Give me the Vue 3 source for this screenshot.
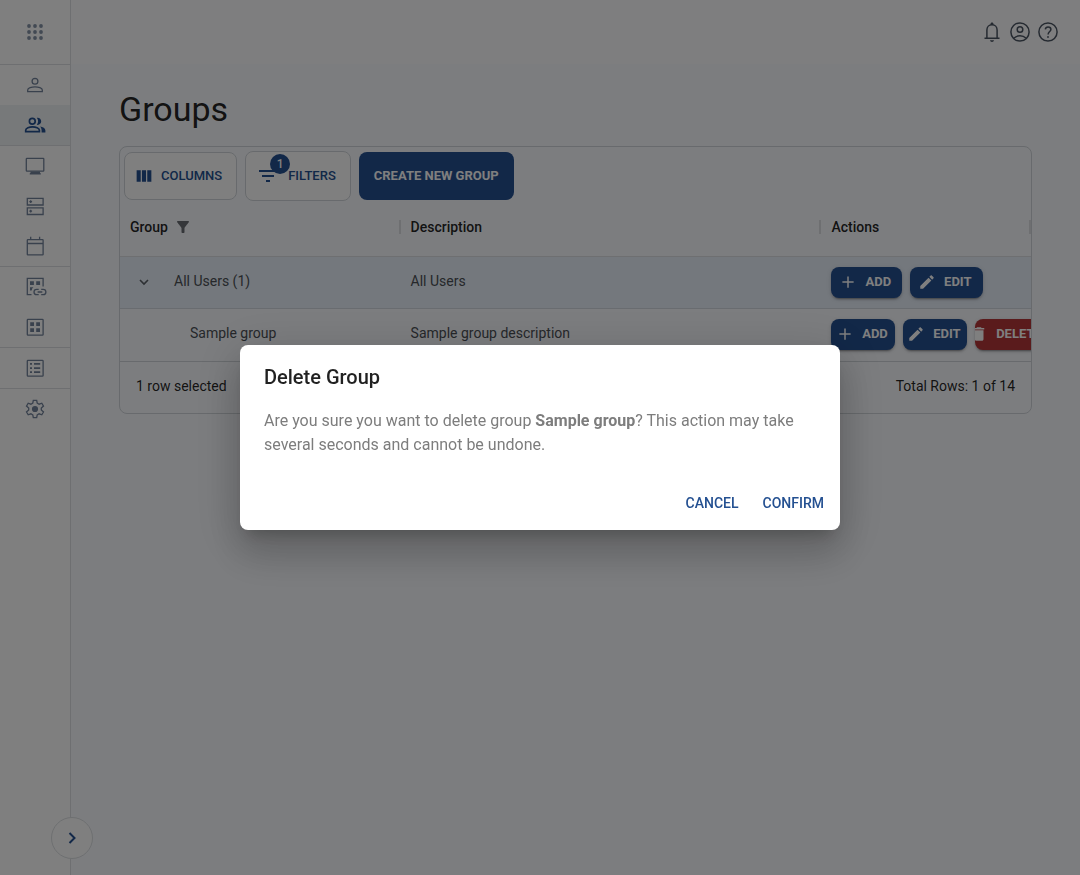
<template>
  <div class="app">
    <aside class="sidebar">
      <button class="apps-btn" aria-label="Apps">
        <svg class="icon" viewBox="0 0 24 24">
          <circle v-for="n in 9" :key="n" :cx="6 + ((n - 1) % 3) * 6" :cy="6 + Math.floor((n - 1) / 3) * 6" r="1.9" fill="currentColor" />
        </svg>
      </button>
      <nav>
        <div v-for="(group, i) in navGroups" :key="i" class="nav-group">
          <a
            v-for="item in group"
            :key="item.label"
            href="#"
            :class="['nav-item', { active: item.active }]"
            :aria-label="item.label"
            @click.prevent
          >
            <svg class="icon" viewBox="0 0 24 24">
              <path class="line" :d="item.line" />
              <path v-if="item.solid" fill="currentColor" :d="item.solid" />
            </svg>
          </a>
        </div>
      </nav>
      <button class="expand-btn" aria-label="Expand menu">
        <svg class="icon-sm" viewBox="0 0 18 18">
          <path d="M6.5 4l5 5-5 5" fill="none" stroke="currentColor" stroke-width="2" />
        </svg>
      </button>
    </aside>

    <div class="content">
      <header class="topbar">
        <button v-for="item in topIcons" :key="item.label" class="top-btn" :aria-label="item.label">
          <svg class="icon" viewBox="0 0 24 24">
            <path class="line" :d="item.line" />
            <path v-if="item.solid" fill="currentColor" :d="item.solid" />
          </svg>
        </button>
      </header>

      <main class="page">
        <h1>Groups</h1>

        <section class="card">
          <div class="toolbar">
            <button class="btn btn-outlined">
              <svg class="icon-sm" viewBox="1 1 22 22">
                <path fill="currentColor" d="M14.5 5v14h-5V5zM21 19V5h-5v14zM8 19V5H3v14z" />
              </svg>
              Columns
            </button>
            <button class="btn btn-outlined btn-filters">
              <span class="badge-wrap">
                <svg class="icon" viewBox="0 0 24 24">
                  <path fill="currentColor" d="M10 18h4v-2h-4zM3 6v2h18V6zm3 7h12v-2H6z" />
                </svg>
                <span class="badge">1</span>
              </span>
              Filters
            </button>
            <button class="btn btn-create">Create new group</button>
          </div>

          <table>
            <colgroup>
              <col class="col-group" />
              <col class="col-description" />
              <col />
            </colgroup>
            <thead>
              <tr>
                <th>
                  <div class="head-cell">
                    Group
                    <svg class="icon-sm filter-icon" viewBox="0 0 24 24">
                      <path fill="currentColor" d="M4.25 5.61C6.27 8.2 10 13 10 13v6c0 .55.45 1 1 1h2c.55 0 1-.45 1-1v-6s3.72-4.8 5.74-7.39c.51-.66.04-1.61-.79-1.61H5.04c-.83 0-1.3.95-.79 1.61" />
                    </svg>
                    <i class="separator"></i>
                  </div>
                </th>
                <th><div class="head-cell">Description<i class="separator"></i></div></th>
                <th><div class="head-cell">Actions<i class="separator"></i></div></th>
              </tr>
            </thead>
            <tbody>
              <tr v-for="row in rows" :key="row.name" :class="{ selected: row.selected }">
                <td>
                  <div :class="['name-cell', { child: !row.expandable }]">
                    <button v-if="row.expandable" class="toggle-btn" aria-label="Collapse">
                      <svg class="icon-sm" viewBox="0 0 18 18">
                        <path d="M5 7l4 4 4-4" fill="none" stroke="currentColor" stroke-width="1.6" />
                      </svg>
                    </button>
                    {{ row.name }}
                  </div>
                </td>
                <td>{{ row.description }}</td>
                <td class="actions-cell">
                  <div class="actions">
                    <button
                      v-for="action in row.actions"
                      :key="action"
                      :class="['btn', 'btn-action', { 'btn-danger': action === 'Delete' }]"
                    >
                      <svg class="icon-sm" viewBox="0 0 24 24">
                        <path fill="currentColor" :d="actionIcons[action]" />
                      </svg>
                      {{ action }}
                    </button>
                  </div>
                </td>
              </tr>
            </tbody>
          </table>

          <footer class="card-footer">
            <span>1 row selected</span>
            <span>Total Rows: 1 of 14</span>
          </footer>
        </section>
      </main>
    </div>

    <div v-if="dialogOpen" class="backdrop">
      <div class="dialog" role="dialog" aria-modal="true" aria-labelledby="dialog-title">
        <h2 id="dialog-title">Delete Group</h2>
        <p>
          Are you sure you want to delete group <strong>Sample group</strong>? This action may take
          several seconds and cannot be undone.
        </p>
        <div class="dialog-actions">
          <button class="btn-text" @click="dialogOpen = false">Cancel</button>
          <button class="btn-text" @click="dialogOpen = false">Confirm</button>
        </div>
      </div>
    </div>
  </div>
</template>

<script setup>
import { ref } from 'vue';

const dialogOpen = ref(true);

const frame = 'M5 4.4h14.4q.7 0 .7.7v14.4q0 .6-.7.6H5q-.7 0-.7-.6V5.1q0-.7.7-.7z';

// line = stroked part of the icon, solid = filled part
const navGroups = [
  [
    {
      label: 'Users',
      line: 'M12 5.4a2.9 2.9 0 1 0 0 5.8a2.9 2.9 0 0 0 0-5.8zM4.7 18.6v-1.5c0-2 4-3.3 7.3-3.3s7.3 1.3 7.3 3.3v1.5z'
    },
    {
      label: 'Groups',
      active: true,
      line: 'M9.3 5.4a2.9 2.9 0 1 0 0 5.8a2.9 2.9 0 0 0 0-5.8zM2.7 18.6v-1.4c0-2 3.6-3.3 6.8-3.3s6.9 1.3 6.9 3.3v1.4z',
      solid: 'M13.8 4.8c2.4-.5 4.4 1.2 4.4 3.5s-2 4-4.4 3.5c1.8-2 1.8-5 0-7zM17 13.6c2.9.5 5.4 1.8 5.4 3.8v2h-3.8v-2c0-1.6-.5-2.8-1.6-3.8z'
    }
  ],
  [
    {
      label: 'Displays',
      line: 'M4 4.4h16.2q.6 0 .6.6v11.6q0 .6-.6.6H4q-.7 0-.7-.6V5q0-.6.7-.6z',
      solid: 'M7.5 17.5h9.5v1.2l.8.7v1H6.7v-1l.8-.7z'
    },
    {
      label: 'Servers',
      line: 'M4.3 4.4h15.8v6.6H4.3zM4.3 13.9h15.8v6.6H4.3zM7.7 6.3v2.8M6.3 7.7h2.8M7.7 15.8v2.8M6.3 17.2h2.8'
    },
    {
      label: 'Calendar',
      line: 'M4.9 5.6h14.6q.6 0 .6.6v14.2q0 .5-.6.5H4.9q-.6 0-.6-.5V6.2q0-.6.6-.6zM4.3 9.5h15.8M7.7 2.7v3M16.6 2.7v3'
    }
  ],
  [
    {
      label: 'Linked sites',
      line: 'M8.5 19.6H4.3V3.4h15.8v8.2M15.7 14.3h-2a2.7 2.7 0 0 0 0 5.4h2M18.2 14.3h2a2.7 2.7 0 0 1 0 5.4h-2M14.6 17h4.7',
      solid: 'M7 6.2h3.9v3.7H7zM13.2 6.2h3.9v3.7h-3.9zM7 12.2h3.5l-1.3 1.3-.5 2H7z'
    },
    {
      label: 'Sites',
      line: frame,
      solid: 'M7.2 7.2h3.8v3.8H7.2zM13.2 7.2H17v3.8h-3.8zM7.2 13.2h3.8V17H7.2zM13.2 13.2H17V17h-3.8z'
    }
  ],
  [
    {
      label: 'Reports',
      line: frame,
      solid: 'M7 7h2v1.7H7zM11 7h6.2v1.7H11zM7 11.2h2v1.7H7zM11 11.2h6.2v1.7H11zM7 15.3h2V17H7zM11 15.3h6.2V17H11z'
    }
  ],
  [
    {
      label: 'Settings',
      line: 'M10.3 3.3h3.4l.5 2.8 1.9 1.1 2.7-1 1.7 2.9-2.2 1.9v2l2.2 1.9-1.7 2.9-2.7-1-1.9 1.1-.5 2.8h-3.4l-.5-2.8-1.9-1.1-2.7 1-1.7-2.9L5.7 13v-2L3.5 9.1l1.7-2.9 2.7 1 1.9-1.1z',
      solid: 'M12 8.9a3.1 3.1 0 1 0 0 6.2a3.1 3.1 0 0 0 0-6.2z'
    }
  ]
];

const topIcons = [
  {
    label: 'Notifications',
    line: 'M4.5 18.2h15M6.9 18V10c0-2.9 2.1-5.2 5.1-5.2s5.1 2.3 5.1 5.2v8',
    solid: 'M12 2.6c.9 0 1.5.7 1.5 1.5v1h-3v-1c0-.8.6-1.5 1.5-1.5zM10 20.2h4c-.2 1-1 1.7-2 1.7s-1.8-.7-2-1.7z'
  },
  {
    label: 'Account',
    line: 'M12 2.9a9.1 9.1 0 1 0 0 18.2a9.1 9.1 0 0 0 0-18.2zM12 6.7a2.8 2.8 0 1 0 0 5.6a2.8 2.8 0 0 0 0-5.6zM5.8 18.3c3.6-3.5 8.8-3.5 12.4 0'
  },
  {
    label: 'Help',
    line: 'M12 2.9a9.1 9.1 0 1 0 0 18.2a9.1 9.1 0 0 0 0-18.2zM9.3 9.3c.2-1.5 1.3-2.4 2.8-2.4s2.8 1 2.8 2.5c0 2-2.8 2.4-2.8 5.1',
    solid: 'M12 16.1a.9.9 0 1 0 0 1.8a.9.9 0 0 0 0-1.8z'
  }
];

const actionIcons = {
  Add: 'M19.5 13H13v6.5h-2V13H4.500v-2H11V4.500h2V11h6.500z',
  Edit: 'M3 17.25V21h3.75L17.81 9.94l-3.75-3.75zM20.71 7.04c.39-.39.39-1.02 0-1.41l-2.34-2.34c-.39-.39-1.02-.39-1.41 0l-1.83 1.83 3.75 3.75z',
  Delete: 'M6 19c0 1.1.9 2 2 2h8c1.1 0 2-.9 2-2V7H6zM19 4h-3.5l-1-1h-5l-1 1H5v2h14z'
};

const rows = [
  {
    name: 'All Users (1)',
    description: 'All Users',
    expandable: true,
    selected: true,
    actions: ['Add', 'Edit']
  },
  {
    name: 'Sample group',
    description: 'Sample group description',
    actions: ['Add', 'Edit', 'Delete']
  }
];
</script>

<style>
body {
  margin: 0;
  font-family: Roboto, Arial, sans-serif;
}
</style>

<style scoped>
.app {
  display: flex;
  min-height: 100vh;
  background: #f9fbff;
  color: rgba(0, 0, 0, 0.87);
  font-size: 14px;
}

.app * {
  box-sizing: border-box;
}

button {
  font-family: inherit;
  padding: 0;
  border: none;
  background: none;
  color: inherit;
  cursor: pointer;
}

.icon {
  display: block;
  flex: none;
  width: 24px;
  height: 24px;
}

.icon-sm {
  display: block;
  flex: none;
  width: 18px;
  height: 18px;
}

.line {
  fill: none;
  stroke: currentColor;
  stroke-width: 1.3;
}

/* Sidebar */
.sidebar {
  position: relative;
  flex: none;
  width: 71px;
  background: #fff;
  border-right: 1px solid #dcdfe2;
}

.apps-btn {
  display: flex;
  align-items: center;
  justify-content: center;
  width: 100%;
  height: 65px;
  border-bottom: 1px solid #dcdfe2;
  color: #8492a6;
}

.nav-group {
  border-bottom: 1px solid #dcdfe2;
}

.nav-group:last-child {
  border-bottom: none;
}

.nav-item {
  display: flex;
  align-items: center;
  justify-content: center;
  height: 40px;
  color: #73839b;
}

.nav-item.active {
  background: #eff3f5;
  color: #245091;
}

.nav-item.active .line {
  stroke-width: 1.7;
}

.expand-btn {
  position: absolute;
  right: -23px;
  bottom: 16px;
  display: flex;
  align-items: center;
  justify-content: center;
  width: 42px;
  height: 42px;
  border: 1px solid #dcdfe2;
  border-radius: 50%;
  background: #fff;
  color: #245091;
}

/* Page */
.content {
  flex: 1;
  min-width: 0;
}

.topbar {
  display: flex;
  align-items: center;
  justify-content: flex-end;
  gap: 4px;
  height: 64px;
  padding: 0 20px;
  background: #fdfdfe;
}

.top-btn {
  color: #4b5563;
}

.top-btn .line {
  stroke-width: 1.5;
}

.page {
  padding: 24px 48px;
}

h1 {
  margin: 0 0 16px;
  font-size: 34px;
  font-weight: 400;
  line-height: 42px;
}

.card {
  overflow: hidden;
  border: 1px solid #d0d5da;
  border-radius: 8px;
}

.toolbar {
  display: flex;
  align-items: center;
  gap: 8px;
  padding: 4px 4px 0;
}

.btn {
  display: flex;
  align-items: center;
  justify-content: center;
  gap: 8px;
  border-radius: 8px;
  font-size: 13px;
  font-weight: 700;
  line-height: 22px;
  text-transform: uppercase;
  white-space: nowrap;
}

.btn-outlined {
  height: 48px;
  padding: 0 14px 1px 10px;
  border: 1px solid #d0d5da;
  background: #fff;
  color: #245091;
  font-weight: 500;
}

.btn-filters {
  height: 50px;
}

.badge-wrap {
  position: relative;
}

.badge {
  position: absolute;
  top: -10px;
  right: -10px;
  width: 20px;
  height: 20px;
  border-radius: 50%;
  background: #245091;
  color: #fff;
  font-size: 12px;
  line-height: 20px;
}

.btn-create {
  height: 48px;
  padding: 0 15px 1px;
  background: #245091;
  color: #fff;
}

/* Table */
table {
  width: 100%;
  table-layout: fixed;
  border-collapse: separate;
  border-spacing: 0;
}

.col-group {
  width: 30.8%;
}

.col-description {
  width: 46.2%;
}

th {
  height: 56px;
  padding: 0 0 4px 10px;
  border-bottom: 1px solid #dcdfe2;
  font-weight: 500;
  text-align: left;
}

.head-cell {
  display: flex;
  align-items: center;
}

.filter-icon {
  margin-left: 6px;
  color: #6b6f74;
}

.separator {
  width: 2px;
  height: 14px;
  margin-left: auto;
  background: #dcdfe2;
}

td {
  height: 52px;
  padding: 0 10px 4px;
  border-bottom: 1px solid transparent;
  color: #4c5056;
  line-height: 20px;
}

td.actions-cell {
  padding-bottom: 0;
}

tr.selected td {
  border-bottom-color: #d3d9e0;
  background: #e8f0fa;
}

.name-cell {
  display: flex;
  align-items: center;
  gap: 16px;
}

.name-cell.child {
  padding-left: 60px;
}

.toggle-btn {
  margin-top: 2px;
  padding: 5px;
  color: #5b6067;
}

.actions {
  display: flex;
  gap: 8px;
}

.btn-action {
  min-width: 64px;
  padding: 4px 11px 5px 8px;
  overflow: hidden;
  background: #245091;
  color: #fff;
  box-shadow: 0 3px 1px -2px rgba(0, 0, 0, 0.2), 0 2px 2px 0 rgba(0, 0, 0, 0.14), 0 1px 5px 0 rgba(0, 0, 0, 0.12);
}

.btn-danger {
  background: #b53638;
}

.card-footer {
  display: flex;
  align-items: center;
  justify-content: space-between;
  min-height: 52px;
  padding: 0 16px 3px;
  border-top: 1px solid #d0d5da;
}

/* Dialog */
.backdrop {
  position: fixed;
  inset: 0;
  display: flex;
  align-items: center;
  justify-content: center;
  background: rgba(0, 0, 0, 0.5);
}

.dialog {
  width: 100%;
  max-width: 600px;
  margin: 32px;
  border-radius: 8px;
  background: #fff;
  box-shadow: 0 11px 15px -7px rgba(0, 0, 0, 0.2), 0 24px 38px 3px rgba(0, 0, 0, 0.14), 0 9px 46px 8px rgba(0, 0, 0, 0.12);
}

.dialog h2 {
  margin: 0;
  padding: 16px 24px;
  font-size: 20px;
  font-weight: 500;
  line-height: 32px;
}

.dialog p {
  margin: 0;
  padding: 0 24px 20px;
  color: #7d7d7d;
  font-size: 16px;
  line-height: 24px;
}

.dialog-actions {
  display: flex;
  justify-content: flex-end;
  gap: 8px;
  padding: 8px;
}

.btn-text {
  min-width: 64px;
  padding: 6px 8px 7px;
  border-radius: 8px;
  color: #245091;
  font-size: 14px;
  font-weight: 500;
  line-height: 24px;
  text-transform: uppercase;
}
</style>
